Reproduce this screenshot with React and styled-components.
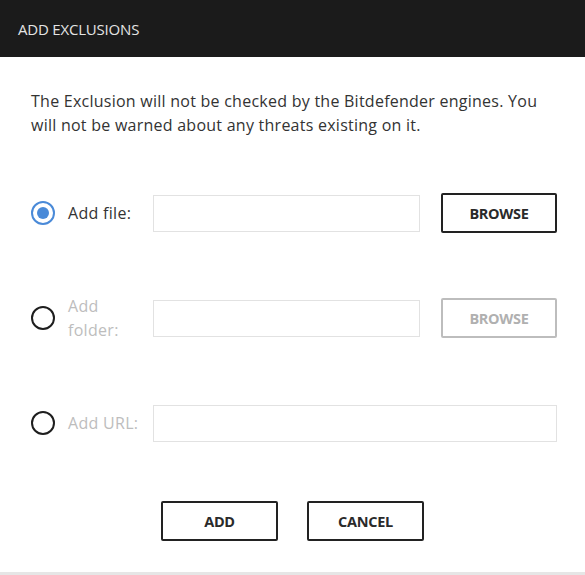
import React from "react";
import styled, { createGlobalStyle } from "styled-components";

const GlobalStyle = createGlobalStyle`
  * { box-sizing: border-box; }
  body {
    margin: 0;
    background: #ffffff;
    font-family: "Open Sans", "Noto Sans", sans-serif;
  }
`;

const rows = [
  { id: "file", label: "Add file:", checked: true, browse: true },
  { id: "folder", label: "Add folder:", checked: false, browse: true },
  { id: "url", label: "Add URL:", checked: false, browse: false },
];

function App() {
  return (
    <>
      <GlobalStyle />
      <Dialog>
        <Header>
          <Title>ADD EXCLUSIONS</Title>
        </Header>
        <Body>
          <Description>
            The Exclusion will not be checked by the Bitdefender engines. You
            will not be warned about any threats existing on it.
          </Description>
          <Form>
            {rows.map((row) => (
              <Row key={row.id}>
                <Radio checked={row.checked} />
                <Label $disabled={!row.checked}>{row.label}</Label>
                <TextInput $wide={!row.browse} disabled={!row.checked} />
                {row.browse && (
                  <Button $disabled={!row.checked}>BROWSE</Button>
                )}
              </Row>
            ))}
          </Form>
          <Footer>
            <Button $wide>ADD</Button>
            <Button $wide>CANCEL</Button>
          </Footer>
        </Body>
      </Dialog>
    </>
  );
}

export default App;

const Dialog = styled.main`
  width: 585px;
  height: 575px;
  display: flex;
  flex-direction: column;
  border-bottom: 3px solid #e6e6e6;
`;

const Header = styled.div`
  height: 57px;
  background: #1b1b1b;
  display: flex;
  align-items: center;
  padding-left: 18px;
`;

const Title = styled.h1`
  margin: 0;
  font-size: 15px;
  font-weight: 400;
  color: #e4e4e4;
  letter-spacing: -0.2px;
`;

const Body = styled.div`
  flex: 1;
  padding: 32px 28px 0 31px;
`;

const Description = styled.p`
  margin: 0;
  font-size: 16px;
  line-height: 24px;
  color: #333333;
  letter-spacing: 0.25px;
`;

const Form = styled.div`
  margin-top: 56px;
  display: flex;
  flex-direction: column;
  gap: 65px;
`;

const Row = styled.div`
  height: 40px;
  display: flex;
  align-items: center;
`;

const Radio = styled.span`
  flex: 0 0 24px;
  height: 24px;
  border-radius: 50%;
  border: 2px solid ${(p) => (p.checked ? "#4a8ad8" : "#1e1e1e")};
  display: flex;
  align-items: center;
  justify-content: center;
  margin-right: 13px;

  &::after {
    content: "";
    display: ${(p) => (p.checked ? "block" : "none")};
    width: 12px;
    height: 12px;
    border-radius: 50%;
    background: #4a8ad8;
  }
`;

const Label = styled.label`
  flex: 0 0 72px;
  margin-right: 13px;
  font-size: 16px;
  line-height: 24px;
  color: ${(p) => (p.$disabled ? "#bdbdbd" : "#333333")};
  letter-spacing: 0.3px;
`;

const TextInput = styled.input`
  flex: ${(p) => (p.$wide ? "1" : "0 0 267px")};
  height: 37px;
  border: 1px solid #e2e2e2;
  background: #ffffff;
  outline: none;
`;

const Button = styled.button`
  width: ${(p) => (p.$wide ? "117px" : "116px")};
  height: 40px;
  margin-left: ${(p) => (p.$wide ? "0" : "21px")};
  background: #ffffff;
  border: 2px solid ${(p) => (p.$disabled ? "#bdbdbd" : "#222222")};
  border-radius: 2px;
  color: ${(p) => (p.$disabled ? "#b0b0b0" : "#2a2a2a")};
  font-family: "Open Sans", "Noto Sans", sans-serif;
  font-size: 14.5px;
  font-weight: 700;
  letter-spacing: -0.3px;
  cursor: pointer;
`;

const Footer = styled.div`
  margin-top: 58px;
  display: flex;
  justify-content: center;
  gap: 29px;
  padding-right: 3px;
`;
